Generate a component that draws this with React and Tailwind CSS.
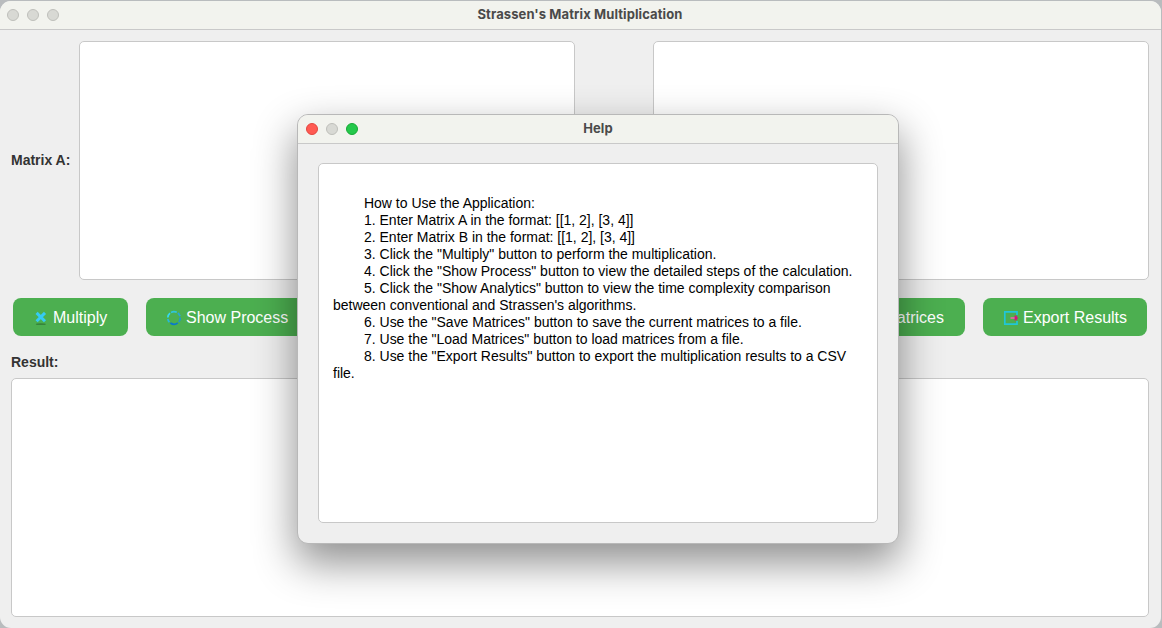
import React from 'react';

function Dot({ className }) {
  return <span className={`size-3 rounded-full border ${className}`} />;
}

function TitleBar({ title, active, className }) {
  const idle = 'border-[#bebfba] bg-[#d8d9d4]';
  return (
    <header className={`grid shrink-0 grid-cols-[1fr_auto_1fr] items-center border-b border-[#c9c9c9] bg-[#f2f3ee] ${className}`}>
      <div className="flex gap-2">
        <Dot className={active ? 'border-[#e2463f] bg-[#ff5a52]' : idle} />
        <Dot className={idle} />
        <Dot className={active ? 'border-[#17a935] bg-[#24c84b]' : idle} />
      </div>
      <h1 className="pb-[2px] font-['Inter',sans-serif] text-[13px] leading-4 font-bold tracking-[0.1px] text-[#4a4a4a]">{title}</h1>
    </header>
  );
}

function MultiplyIcon() {
  return (
    <svg className="size-4" viewBox="0 0 16 16" fill="none">
      <ellipse cx="7.8" cy="14.2" rx="5" ry="0.9" fill="#36853c" />
      <path d="M3.6 2.9 12 11.3M12 2.9 3.6 11.3" stroke="#35cbf5" strokeWidth="3" />
    </svg>
  );
}

function ProcessIcon() {
  return (
    <svg className="size-4" viewBox="0 0 16 16" fill="none" strokeWidth="1.7">
      <path d="M1.8 7.5A6.2 6.2 0 0 1 4 3.2" stroke="#35d8f4" />
      <path d="M5 2.4A6.2 6.2 0 0 1 10.8 2.3" stroke="#2fc5dc" />
      <path d="M11.8 3A6.2 6.2 0 0 1 14 6.2" stroke="#28a8d0" />
      <path d="M14.2 7.5A6.2 6.2 0 0 1 12.8 12" stroke="#1c96d4" />
      <path d="M11.8 12.9A6.2 6.2 0 0 1 4.4 13" stroke="#0879cc" />
      <path d="M3.4 12.2A6.2 6.2 0 0 1 1.8 9" stroke="#27b9d9" />
    </svg>
  );
}

function ExportIcon() {
  return (
    <svg className="size-4" viewBox="0 0 16 16" fill="none">
      <path d="M14 5V1.8H1.8V14.2H14V11" stroke="#20c6d8" strokeWidth="1.7" />
      <path d="M7.5 8H12.5" stroke="#c97797" strokeWidth="2" />
      <path d="M11.6 5.6H13.2L15 8 13.2 10.4H11.6Z" fill="#d3147b" />
    </svg>
  );
}

function Button({ icon, children, className }) {
  return (
    <button className={`flex h-[38px] items-center gap-1 rounded-lg bg-[#4caf50] pt-[2px] pl-5 text-[16px] leading-5 whitespace-nowrap text-white ${className}`}>
      {icon}
      <span>{children}</span>
    </button>
  );
}

const lines = [
  ['How to Use the Application:', true],
  ['1. Enter Matrix A in the format: [[1, 2], [3, 4]]', true],
  ['2. Enter Matrix B in the format: [[1, 2], [3, 4]]', true],
  ['3. Click the "Multiply" button to perform the multiplication.', true],
  ['4. Click the "Show Process" button to view the detailed steps of the calculation.', true],
  ['5. Click the "Show Analytics" button to view the time complexity comparison', true],
  ["between conventional and Strassen's algorithms.", false],
  ['6. Use the "Save Matrices" button to save the current matrices to a file.', true],
  ['7. Use the "Load Matrices" button to load matrices from a file.', true],
  ['8. Use the "Export Results" button to export the multiplication results to a CSV', true],
  ['file.', false],
];

function HelpDialog() {
  return (
    <section className="absolute top-[114px] left-[297px] flex h-[430px] w-[602px] flex-col overflow-hidden rounded-[11px] border border-[#b8b8b8] bg-[#efefef] shadow-[0_18px_42px_1px_rgba(0,0,0,0.44)]">
      <TitleBar title="Help" active className="h-[29px] px-2" />
      <div className="mx-5 mt-[19px] h-[360px] rounded-[5px] border border-[#c8c8c8] bg-white pt-[31px] pl-[14px] text-[14px] leading-[17px] tracking-[-0.012px] text-black">
        {lines.map(([text, indent]) => (
          <p key={text} className={indent ? 'pl-[31px] whitespace-nowrap' : 'whitespace-nowrap'}>{text}</p>
        ))}
      </div>
    </section>
  );
}

export default function App() {
  return (
    <div className="relative h-[628px] w-[1162px] overflow-hidden bg-[#b9bcbe] pt-px font-['Liberation_Sans',Arial,sans-serif]">
      <main className="flex h-[627px] w-[1161px] flex-col overflow-hidden rounded-[11px] bg-[#efefef]">
        <TitleBar title="Strassen's Matrix Multiplication" className="h-[29px] pr-2 pl-[7px]" />
        <div className="mt-[11px] flex h-[239px] shrink-0 pl-[11px]">
          <label className="w-[68px] self-center text-[14px] font-bold text-[#333]">Matrix A:</label>
          <div className="w-[496px] rounded-[5px] border border-[#c8c8c8] bg-white" />
          <div className="ml-[78px] w-[496px] rounded-[5px] border border-[#c8c8c8] bg-white" />
        </div>
        <div className="mt-[18px] flex shrink-0 pl-[13px]">
          <Button className="w-[115px]" icon={<MultiplyIcon />}>Multiply</Button>
          <Button className="ml-[18px] w-[163px]" icon={<ProcessIcon />}>Show Process</Button>
          <Button className="ml-auto w-[164px] justify-end pr-[21px]">Load Matrices</Button>
          <Button className="mr-[14px] ml-[18px] w-[164px]" icon={<ExportIcon />}>Export Results</Button>
        </div>
        <label className="mt-[16px] ml-[11px] text-[14px] leading-5 font-bold text-[#333]">Result:</label>
        <div className="mt-[6px] ml-[11px] h-[239px] w-[1138px] shrink-0 rounded-[5px] border border-[#c8c8c8] bg-white" />
      </main>
      <HelpDialog />
    </div>
  );
}
